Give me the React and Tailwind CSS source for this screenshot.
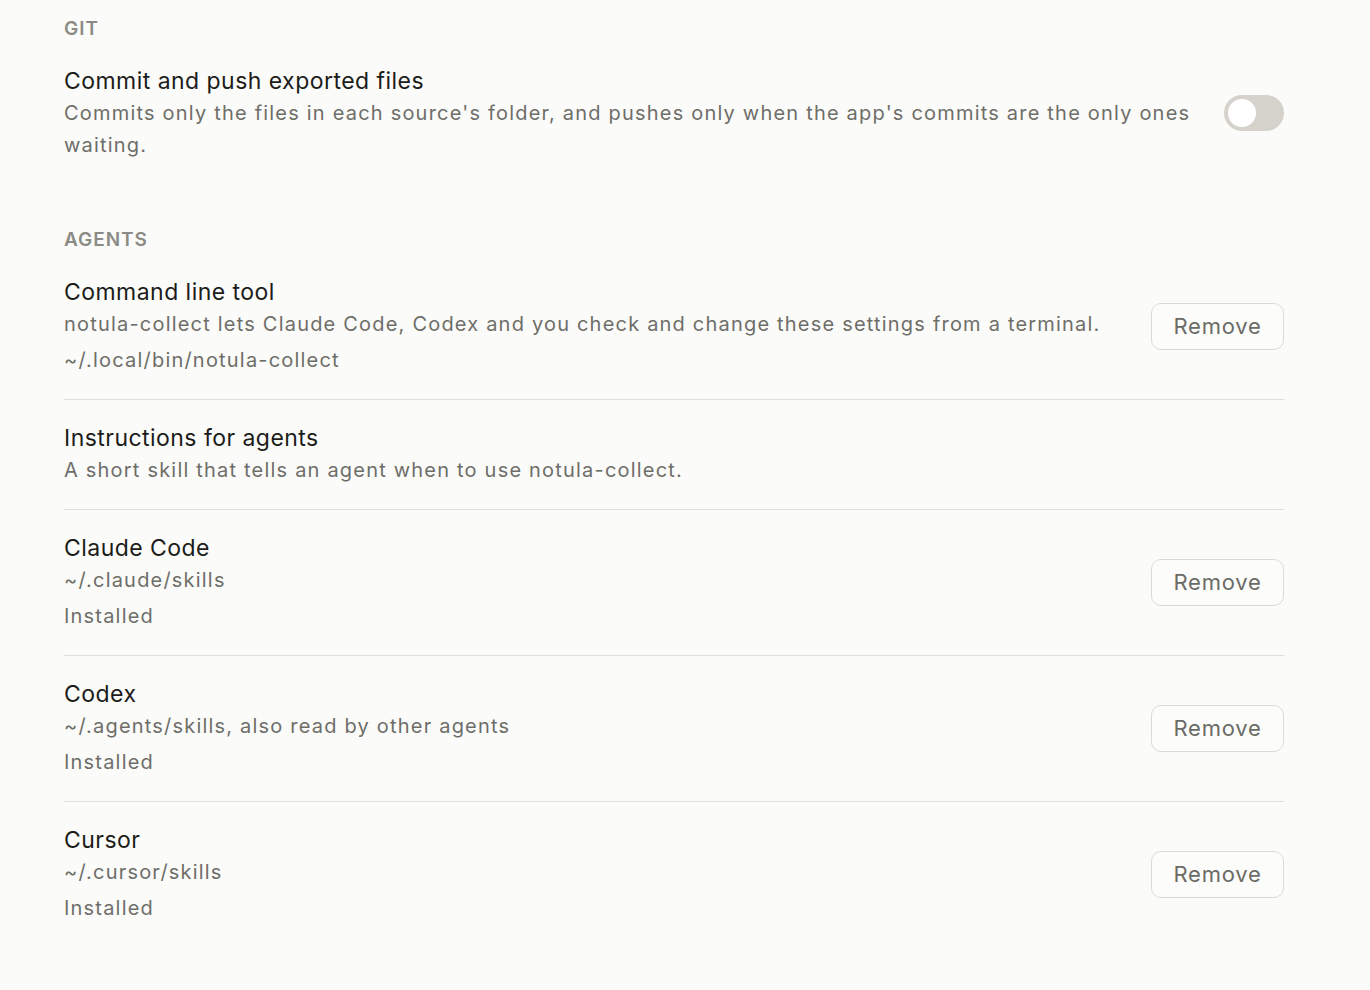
import React from 'react';

const font = { fontFamily: 'Inter, "Liberation Sans", sans-serif' };

function SectionHeader({ children, className = '' }) {
  return (
    <h2 className={`text-[19px] leading-6 font-semibold tracking-[0.05em] text-[#8b8b85] uppercase ${className}`}>
      {children}
    </h2>
  );
}

function RemoveButton() {
  return (
    <button className="shrink-0 w-[133px] h-[47px] rounded-[10px] border-[1.5px] border-[#dcdad3] bg-[#fcfcfa] text-[22px] text-[#6b6b66] tracking-[0.035em]">
      Remove
    </button>
  );
}

function Toggle() {
  const [on, setOn] = React.useState(false);
  return (
    <button
      onClick={() => setOn(!on)}
      className={`shrink-0 w-[60px] h-[36px] rounded-full p-[4px] flex items-center ${on ? 'bg-[#3a3a37] justify-end' : 'bg-[#d4d2ca] justify-start'}`}
    >
      <span className="block w-[28px] h-[28px] rounded-full bg-white" />
    </button>
  );
}

function Row({ title, desc, extra, action, border = true }) {
  return (
    <div className={`flex items-center gap-6 py-[22px] ${border ? 'border-b border-[#e0ded8]' : ''}`}>
      <div className="flex-1 min-w-0">
        <div className="text-[23px] leading-8 text-[#1c1c1a] tracking-[0.02em]">{title}</div>
        {desc && <div className="text-[20px] leading-[33px] text-[#6e6e69] tracking-[0.06em]">{desc}</div>}
        {extra && <div className="mt-[3px] text-[20px] leading-[33px] text-[#6e6e69] tracking-[0.06em]">{extra}</div>}
      </div>
      {action}
    </div>
  );
}

export default function App() {
  const agents = [
    { title: 'Claude Code', path: '~/.claude/skills' },
    { title: 'Codex', path: '~/.agents/skills, also read by other agents' },
    { title: 'Cursor', path: '~/.cursor/skills' },
  ];

  return (
    <div className="min-h-screen bg-[#fbfbf9] antialiased" style={font}>
      <div className="w-[1220px] ml-16 pt-[17px] pb-10">
        <SectionHeader>Git</SectionHeader>
        <div className="mt-[2px]">
          <div className="flex items-center gap-6 py-[22px]">
            <div className="flex-1 min-w-0">
              <div className="text-[23px] leading-8 text-[#1c1c1a] tracking-[0.02em]">Commit and push exported files</div>
              <div className="text-[20px] leading-8 text-[#6e6e69] tracking-[0.06em]">
                Commits only the files in each source's folder, and pushes only when the app's commits are the only ones waiting.
              </div>
            </div>
            <Toggle />
          </div>
        </div>

        <SectionHeader className="mt-[45px]">Agents</SectionHeader>
        <div className="mt-[2px]">
          <Row
            title="Command line tool"
            desc="notula-collect lets Claude Code, Codex and you check and change these settings from a terminal."
            extra="~/.local/bin/notula-collect"
            action={<RemoveButton />}
          />
          <Row
            title="Instructions for agents"
            desc="A short skill that tells an agent when to use notula-collect."
          />
          {agents.map((a, i) => (
            <Row
              key={a.title}
              title={a.title}
              desc={a.path}
              extra="Installed"
              action={<RemoveButton />}
              border={i < agents.length - 1}
            />
          ))}
        </div>
      </div>
    </div>
  );
}
